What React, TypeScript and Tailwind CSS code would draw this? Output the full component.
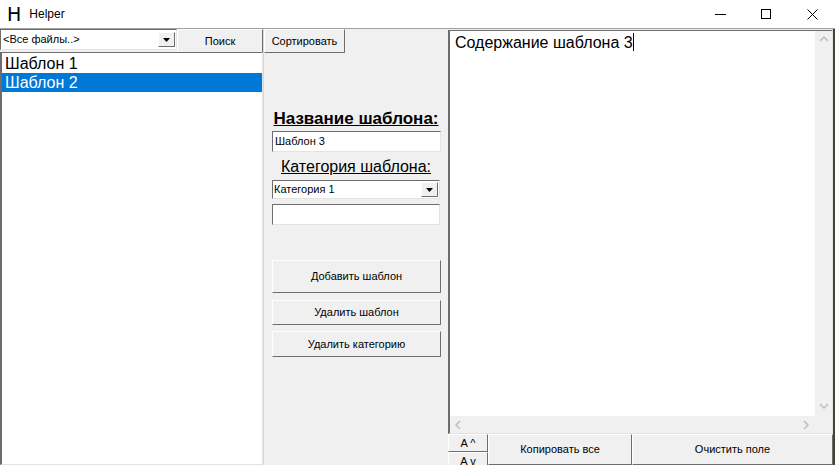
import React from 'react';

const raised = 'border border-t-white border-l-white border-r-[#6d6d6d] border-b-[#6d6d6d] bg-[#f0f0f0]';
const sunken = 'border border-t-[#6d6d6d] border-l-[#6d6d6d] border-r-[#e3e3e3] border-b-[#e3e3e3] bg-white';

const DropArrow: React.FC = () => (
    <div className={`${raised} w-[17px] h-[15px] flex items-center justify-center`}>
        <svg width="7" height="4" viewBox="0 0 7 4">
            <path d="M0 0h7L3.5 4z" fill="#000" />
        </svg>
    </div>
);

const Chevron: React.FC<{ dir: 'up' | 'down' | 'left' | 'right' }> = ({ dir }) => {
    const d = {
        up: 'M1 6l4-4 4 4',
        down: 'M1 2l4 4 4-4',
        left: 'M6 1L2 5l4 4',
        right: 'M3 1l4 4-4 4',
    }[dir];
    return (
        <svg width="10" height="10" viewBox="0 0 10 10">
            <path d={d} fill="none" stroke="#bdbdbd" strokeWidth="1.5" />
        </svg>
    );
};

const App: React.FC = () => {
    return (
        <div className="w-[835px] h-[465px] flex flex-col bg-[#f0f0f0] overflow-hidden" style={{ fontFamily: '"Liberation Sans", Arial, sans-serif' }}>
            {/* title bar */}
            <div className="h-[29px] bg-white flex items-center border-b border-[#a0a0a0] shrink-0">
                <span className="ml-[7px] text-[19px] leading-none text-black" style={{ fontFamily: '"DejaVu Sans", sans-serif' }}>H</span>
                <span className="ml-[8px] text-[12px] text-black">Helper</span>
                <div className="ml-auto flex h-full">
                    <div className="w-[46px] flex items-center justify-center">
                        <div className="w-[11px] h-px bg-black" />
                    </div>
                    <div className="w-[46px] flex items-center justify-center">
                        <div className="w-[10px] h-[10px] border border-black" />
                    </div>
                    <div className="w-[46px] flex items-center justify-center">
                        <svg width="11" height="11" viewBox="0 0 11 11">
                            <path d="M0.5 0.5l10 10M10.5 0.5l-10 10" stroke="#000" strokeWidth="1" />
                        </svg>
                    </div>
                </div>
            </div>

            <div className="flex flex-1 min-h-0">
                {/* left column */}
                <div className="w-[263px] flex flex-col shrink-0">
                    <div className="flex h-[23px] shrink-0">
                        <div className={`${sunken} w-[177px] h-[21px] flex items-center pl-[2px] pr-[1px]`}>
                            <span className="flex-1 text-[11px] text-black">&lt;Все файлы..&gt;</span>
                            <DropArrow />
                        </div>
                        <div className={`${raised} flex-1 h-[24px] flex items-center justify-center text-[11px] text-black`}>Поиск</div>
                    </div>
                    <div className={`${sunken} flex-1 border-l-2 pt-[2px]`}>
                        <div className="h-[18px] text-[16px] leading-[18px] pl-[3px] text-black">Шаблон 1</div>
                        <div className="h-[19px] text-[16px] leading-[19px] pl-[3px] text-white bg-[#0078d7]">Шаблон 2</div>
                    </div>
                </div>

                {/* middle column */}
                <div className="w-[185px] shrink-0 flex flex-col border-l border-[#d8d8d8]">
                    <div className={`${raised} w-[81px] h-[24px] flex items-center justify-center text-[11px] text-black`}>Сортировать</div>
                    <div className="mt-[56px] text-center text-[17px] leading-[20px] font-bold underline text-black">Название шаблона:</div>
                    <div className={`${sunken} ml-[8px] w-[169px] h-[21px] mt-[2px] flex items-center pl-[2px] text-[11px] text-black`}>Шаблон 3</div>
                    <div className="mt-[5px] text-center text-[16px] leading-[20px] underline text-black">Категория шаблона:</div>
                    <div className={`${sunken} ml-[8px] w-[168px] h-[19px] mt-[3px] flex items-center pl-[1px] pr-[1px] text-[11px] text-black`}>
                        <span className="flex-1">Категория 1</span>
                        <DropArrow />
                    </div>
                    <div className={`${sunken} ml-[8px] w-[168px] h-[21px] mt-[5px]`} />
                    <div className={`${raised} ml-[8px] w-[169px] h-[33px] mt-[35px] flex items-center justify-center text-[11px] text-black`}>Добавить шаблон</div>
                    <div className={`${raised} ml-[8px] w-[169px] h-[25px] mt-[7px] flex items-center justify-center text-[11px] text-black`}>Удалить шаблон</div>
                    <div className={`${raised} ml-[8px] w-[169px] h-[26px] mt-[6px] flex items-center justify-center text-[11px] text-black`}>Удалить категорию</div>
                </div>

                {/* right column */}
                <div className="flex-1 flex flex-col min-w-0">
                    <div className={`${sunken} border-l-2 flex-1 flex flex-col min-h-0 mt-px`}>
                        <div className="flex flex-1 min-h-0">
                            <div className="flex-1 pl-[5px] pt-[2px] text-[16px] leading-[20px] text-black">
                                Содержание шаблона 3<span className="inline-block w-px h-[18px] bg-black align-[-3px]" />
                            </div>
                            <div className="w-[17px] bg-[#f0f0f0] flex flex-col items-center justify-between py-[4px]">
                                <Chevron dir="up" />
                                <Chevron dir="down" />
                            </div>
                        </div>
                        <div className="h-[17px] flex shrink-0">
                            <div className="flex-1 bg-[#f0f0f0] flex items-center justify-between px-[4px]">
                                <Chevron dir="left" />
                                <Chevron dir="right" />
                            </div>
                            <div className="w-[17px] bg-[#f0f0f0]" />
                        </div>
                    </div>
                    <div className="h-[31px] flex shrink-0">
                        <div className="w-[40px] flex flex-col">
                            <div className={`${raised} h-[18px] flex items-center justify-center text-[11px] text-black`}>A ^</div>
                            <div className={`${raised} h-[18px] flex items-start pt-[2px] justify-center text-[11px] leading-[13px] text-black`}>A v</div>
                        </div>
                        <div className={`${raised} w-[144px] flex items-center justify-center text-[11px] text-black`}>Копировать все</div>
                        <div className={`${raised} flex-1 flex items-center justify-center text-[11px] text-black`}>Очистить поле</div>
                    </div>
                </div>
                <div className="w-[2px] bg-[#3b4a2c] shrink-0" />
            </div>
        </div>
    );
};

export default App;
